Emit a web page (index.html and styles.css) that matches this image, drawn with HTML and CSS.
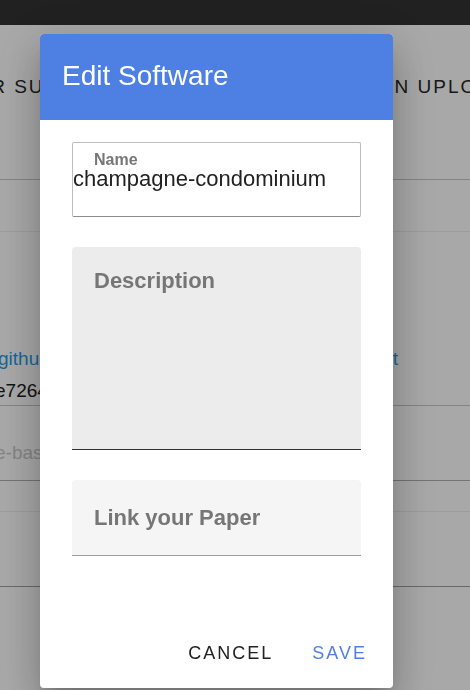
FILE: index.html
```html
<!DOCTYPE html>
<html lang="en">
<head>
<meta charset="utf-8">
<title>Edit Software</title>
<link rel="stylesheet" href="styles.css">
</head>
<body>
<div class="page">
  <header class="appbar"></header>
  <section class="tabs-section">
    <div class="tabs">
      <span class="tab tab-first">YOUR SUBMISSIONS</span>
      <span class="tab tab-second">BEGIN UPLOAD</span>
    </div>
  </section>
  <div class="row row-a"></div>
  <div class="row row-b">
    <div class="link-line">
      <span class="link">github.com/lab/champagne-condominium</span>
      <span class="link link-right">Edit</span>
    </div>
    <div class="hash">e7264b1f</div>
  </div>
  <div class="row row-c"><span class="muted">e-based</span></div>
  <div class="row row-d"></div>
  <div class="row row-e"></div>
</div>

<div class="backdrop"></div>

<div class="dialog-layer">
  <div class="dialog">
    <div class="dialog-title">Edit Software</div>
    <div class="dialog-body">
      <div class="field field-outlined">
        <div class="field-label-small">Name</div>
        <div class="field-value">champagne-condominium</div>
      </div>
      <div class="field field-filled field-desc">
        <div class="field-label">Description</div>
      </div>
      <div class="field field-filled field-link">
        <div class="field-label">Link your Paper</div>
      </div>
    </div>
    <div class="dialog-actions">
      <button class="btn btn-cancel">CANCEL</button>
      <button class="btn btn-save">SAVE</button>
    </div>
  </div>
</div>
</body>
</html>
```

FILE: styles.css
```css
html, body {
  margin: 0;
  padding: 0;
  width: 470px;
  height: 690px;
  overflow: hidden;
  background: #ffffff;
  font-family: "Liberation Sans", Arial, sans-serif;
}

.page {
  width: 470px;
  height: 690px;
  overflow: hidden;
  background: #ffffff;
}

.appbar {
  height: 25px;
  background: #323232;
}

.tabs-section {
  height: 154px;
  border-bottom: 1px solid #c8c8c8;
  overflow: hidden;
}

.tabs {
  display: flex;
  gap: 173px;
  white-space: nowrap;
  padding-top: 50px;
  font-size: 19px;
  line-height: 24px;
  letter-spacing: 2px;
  color: #262626;
}

.tab-first {
  margin-left: -56px;
}

.row {
  overflow: hidden;
  white-space: nowrap;
  font-size: 19px;
}

.row-a {
  height: 51px;
  border-bottom: 1px solid #eeeeee;
}

.row-b {
  height: 174px;
  border-bottom: 1px solid #c8c8c8;
  padding-top: 114px;
  box-sizing: border-box;
}

.link-line {
  display: flex;
  justify-content: space-between;
  padding-right: 72px;
  line-height: 26px;
}

.link {
  color: #1e9ce6;
  margin-left: -2px;
}

.link-right {
  margin-left: 0;
}

.hash {
  color: #1a1a1a;
  margin-left: -5px;
  line-height: 26px;
  margin-top: 6px;
}

.row-c {
  height: 75px;
  border-bottom: 1px solid #b0b0b0;
  padding-top: 34px;
  box-sizing: border-box;
  line-height: 26px;
}

.muted {
  color: #c8c8c8;
  margin-left: -5px;
  display: inline-block;
}

.row-d {
  height: 30px;
  border-bottom: 1px solid #eeeeee;
}

.row-e {
  height: 74px;
  border-bottom: 1px solid #a0a0a0;
}

.backdrop {
  position: fixed;
  inset: 0;
  background: rgba(0, 0, 0, 0.34);
}

.dialog-layer {
  position: fixed;
  inset: 0;
  display: flex;
  justify-content: flex-start;
  align-items: flex-start;
  padding: 34px 0 0 40px;
  box-sizing: border-box;
}

.dialog {
  width: 353px;
  height: 654px;
  background: #ffffff;
  border-radius: 4px;
  overflow: hidden;
  display: flex;
  flex-direction: column;
  box-shadow: 0 11px 15px -7px rgba(0,0,0,0.2),
              0 24px 38px 3px rgba(0,0,0,0.14),
              0 9px 46px 8px rgba(0,0,0,0.12);
}

.dialog-title {
  height: 86px;
  box-sizing: border-box;
  background: #4e7fe3;
  color: #ffffff;
  font-size: 28px;
  line-height: 32px;
  padding: 26px 22px 28px;
}

.dialog-body {
  padding: 22px 32px 0;
  display: flex;
  flex-direction: column;
  gap: 30px;
}

.field {
  box-sizing: border-box;
}

.field-outlined {
  height: 75px;
  border: 1px solid #bdbdbd;
  border-bottom-color: #8c8c8c;
  border-radius: 2px;
  padding-top: 9px;
}

.field-label-small {
  font-size: 16px;
  line-height: 16px;
  font-weight: bold;
  color: #777777;
  padding-left: 21px;
  margin-bottom: 1px;
}

.field-value {
  font-size: 22px;
  line-height: 20px;
  color: #212121;
}

.field-filled {
  border-radius: 4px 4px 0 0;
  padding-left: 22px;
}

.field-desc {
  height: 203px;
  background: #ececec;
  border-bottom: 1px solid #333333;
  padding-top: 22px;
}

.field-link {
  height: 76px;
  background: #f5f5f5;
  border-bottom: 1px solid #9e9e9e;
  padding-top: 26px;
}

.field-label {
  font-size: 22px;
  line-height: 24px;
  font-weight: bold;
  color: #767676;
}

.dialog-actions {
  margin-top: auto;
  display: flex;
  justify-content: flex-end;
  gap: 23px;
  padding: 0 18px 17px 0;
}

.btn {
  font-family: "Liberation Sans", Arial, sans-serif;
  font-size: 18px;
  line-height: 24px;
  letter-spacing: 2px;
  padding: 6px 8px;
  background: transparent;
  border: none;
  margin: 0;
}

.btn-cancel {
  color: #212121;
}

.btn-save {
  color: #4e7fe3;
}
```
